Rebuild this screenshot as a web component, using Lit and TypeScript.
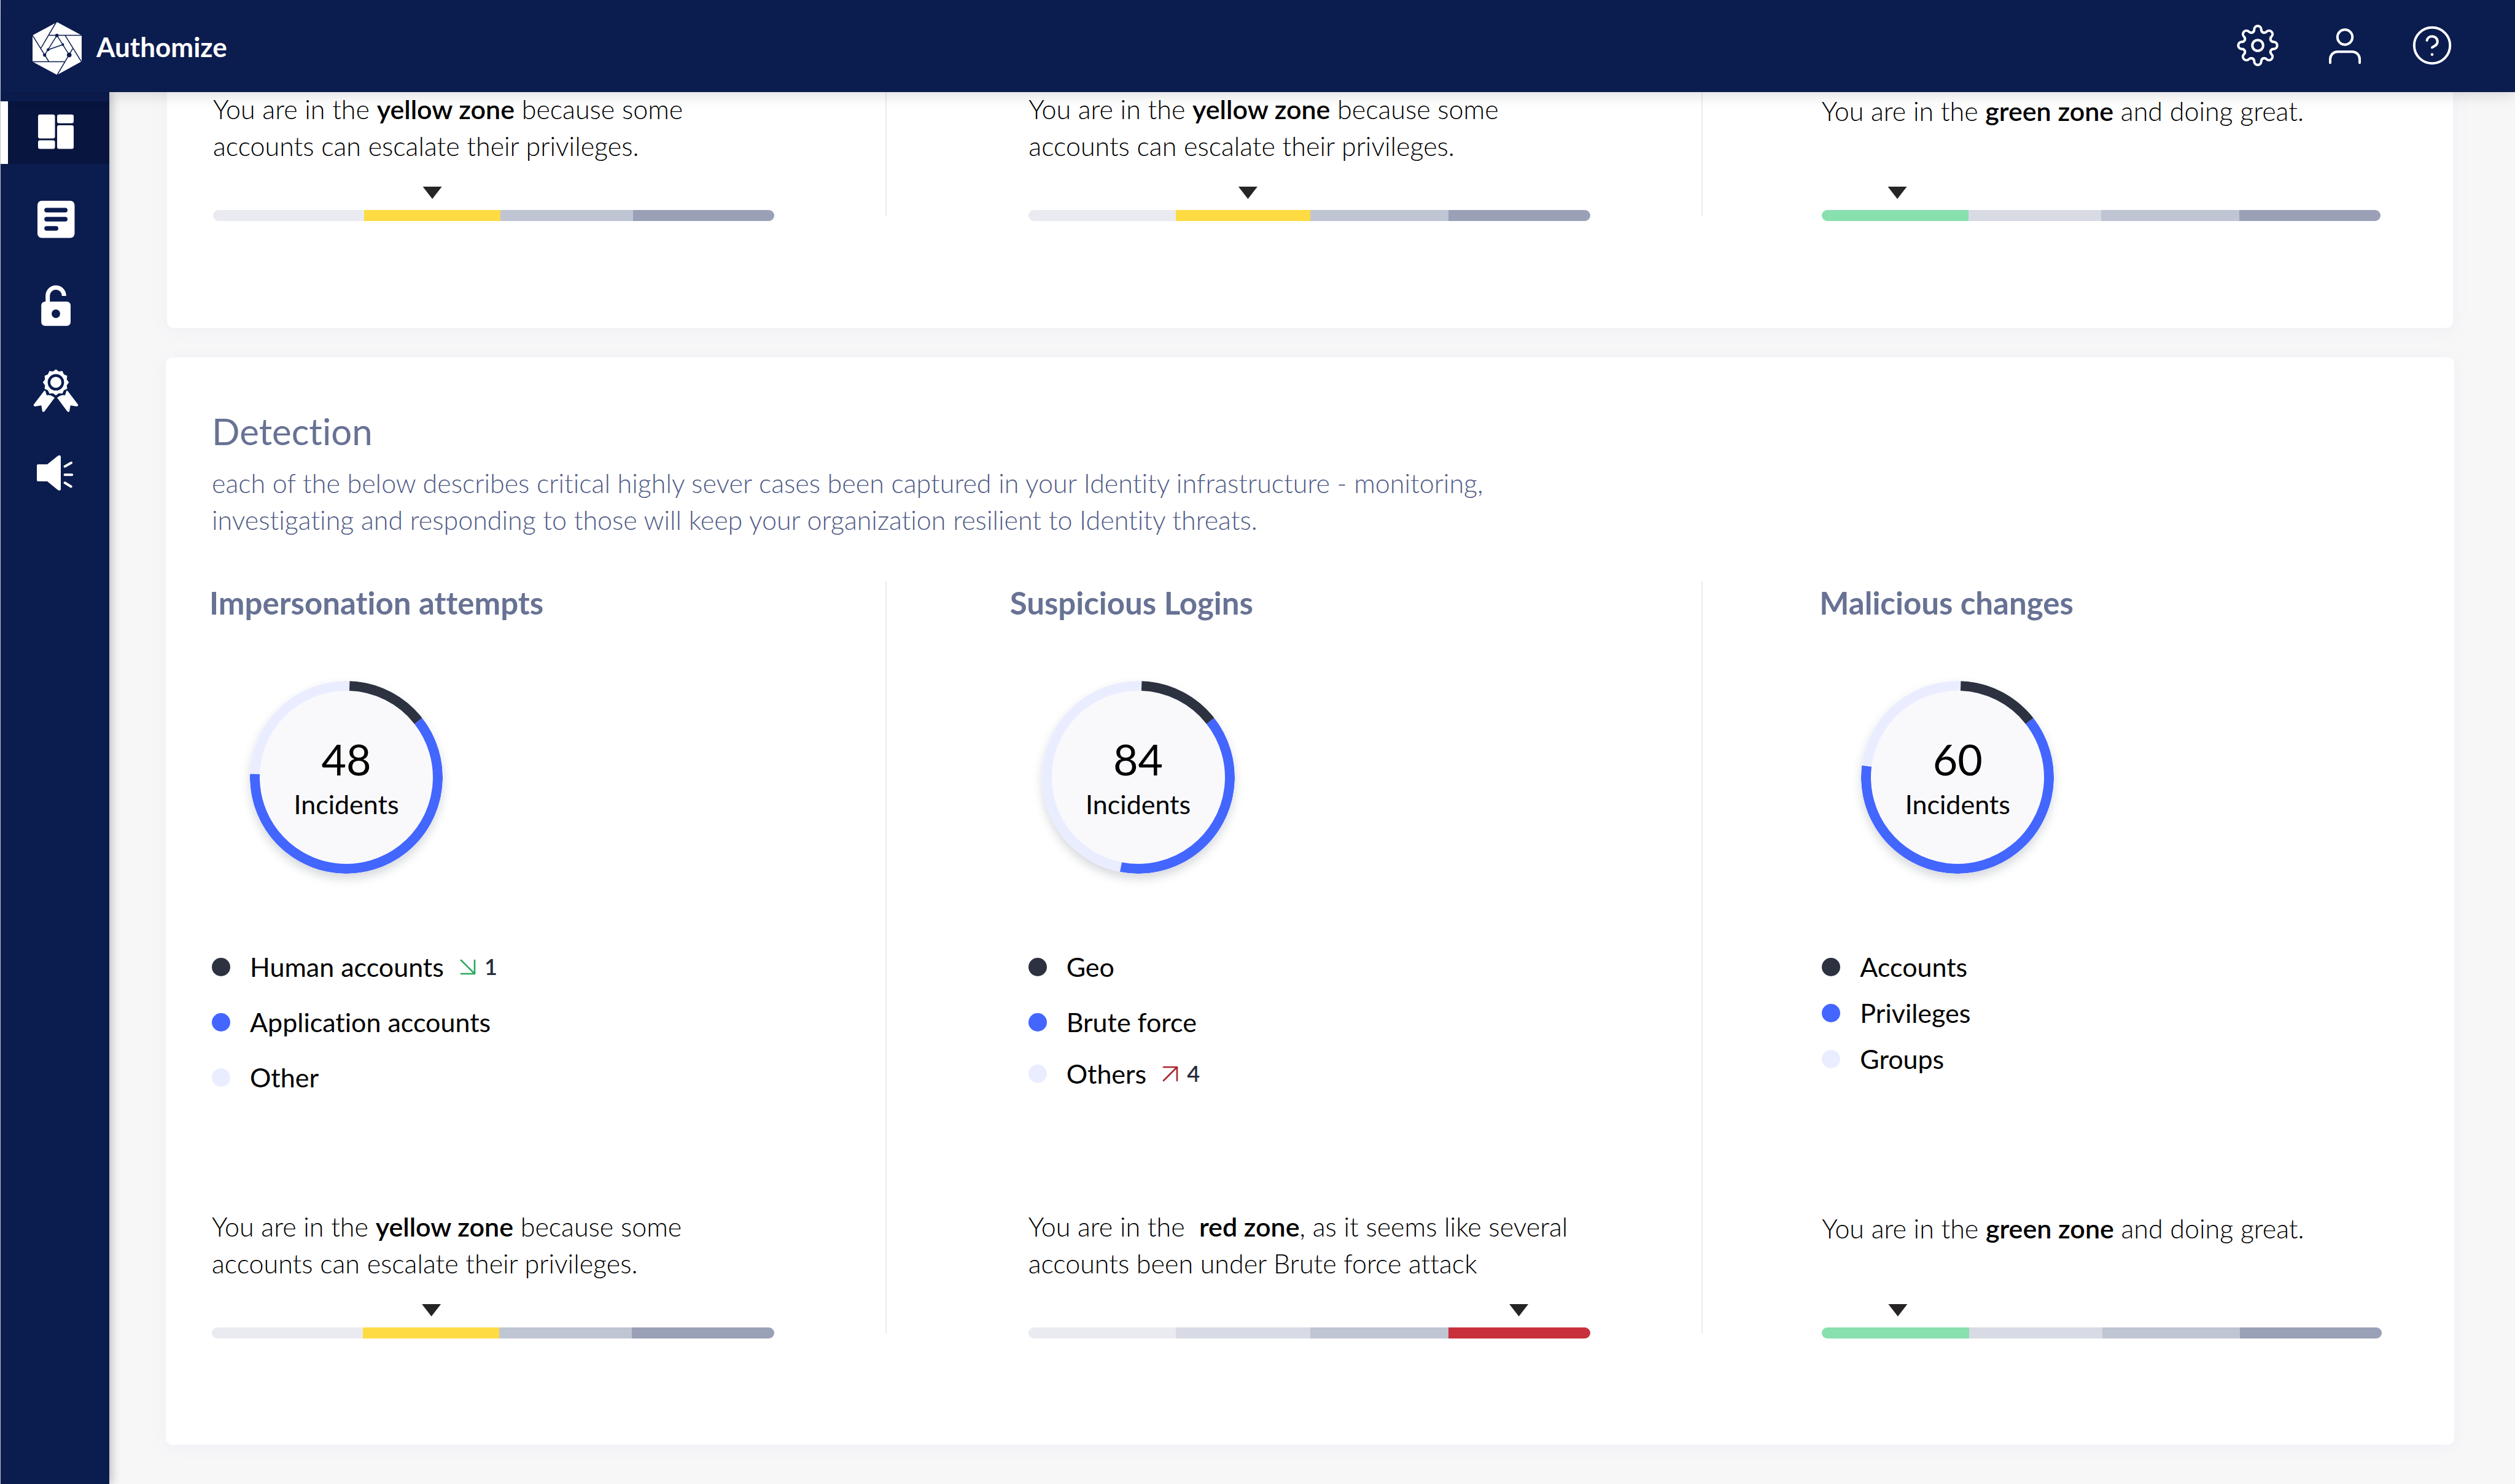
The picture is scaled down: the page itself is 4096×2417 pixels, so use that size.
import { LitElement, html, svg, css, nothing } from "lit";
import { customElement, property } from "lit/decorators.js";
import { classMap } from "lit/directives/class-map.js";
import { styleMap } from "lit/directives/style-map.js";

type Tone = "faint" | "pale" | "mid" | "deep" | "yellow" | "green" | "red";

interface Gauge {
  lead: string;
  zone: string;
  rest: string;
  short?: boolean;
  marker: number;
  segments: [number, Tone][];
}

interface LegendEntry {
  label: string;
  trend?: { dir: "down" | "up"; value: number };
}

interface Incident {
  name: string;
  count: number;
  darkEnd: number;
  blueEnd: number;
  spacing: "wide" | "mixed" | "tight";
  legend: LegendEntry[];
  gauge: Gauge;
}

const yellowFirst: Gauge = {
  lead: "You are in the ",
  zone: "yellow zone",
  rest: " because some accounts can escalate their privileges.",
  marker: 39,
  segments: [[246, "faint"], [222, "yellow"], [216, "mid"], [231, "deep"]],
};

const yellowSecond: Gauge = {
  ...yellowFirst,
  segments: [[240, "faint"], [219, "yellow"], [225, "mid"], [231, "deep"]],
};

const red: Gauge = {
  lead: "You are in the \u00a0",
  zone: "red zone",
  rest: ", as it seems like several accounts been under Brute force attack",
  marker: 87.2,
  segments: [[240, "faint"], [219, "pale"], [225, "mid"], [231, "red"]],
};

const green: Gauge = {
  lead: "You are in the ",
  zone: "green zone",
  rest: " and doing great.",
  short: true,
  marker: 13.5,
  segments: [[240, "green"], [217, "pale"], [225, "mid"], [231, "deep"]],
};

const incidents: Incident[] = [
  {
    name: "Impersonation attempts",
    count: 48,
    darkEnd: 52,
    blueEnd: 272,
    spacing: "wide",
    legend: [
      { label: "Human accounts", trend: { dir: "down", value: 1 } },
      { label: "Application accounts" },
      { label: "Other" },
    ],
    gauge: yellowFirst,
  },
  {
    name: "Suspicious Logins",
    count: 84,
    darkEnd: 52,
    blueEnd: 191,
    spacing: "mixed",
    legend: [
      { label: "Geo" },
      { label: "Brute force" },
      { label: "Others", trend: { dir: "up", value: 4 } },
    ],
    gauge: red,
  },
  {
    name: "Malicious changes",
    count: 60,
    darkEnd: 52,
    blueEnd: 277,
    spacing: "tight",
    legend: [{ label: "Accounts" }, { label: "Privileges" }, { label: "Groups" }],
    gauge: green,
  },
];

/* ---------- icons ---------- */

const logoMark = html`
  <svg class="mark" viewBox="0 -7 80 93" aria-hidden="true">
    <polygon fill="#fff" points="40,0 80,21.5 80,64 40,86 0,64.5 0,21.5" />
    <g stroke="#0b1c4f" stroke-width="1.5" fill="none">
      <path d="M38.9 -.5 13.7 42.3M27 21.4H80M53 21.7 79.6 64.6M65.3 43.3 40 86.2M52.7 64.4H0M26.3 64 0 21.6" />
      <path d="M39.7 21.7 19.7 53.7M25.3 45 49.3 36.7M39.7 21.7 59.7 53.3" />
    </g>
    <g fill="#0b1c4f">
      <circle cx="39.7" cy="21.7" r="2.8" />
      <circle cx="49.3" cy="36.7" r="2.1" />
      <circle cx="25.3" cy="45" r="2.3" />
      <circle cx="19.7" cy="53.7" r="2.6" />
      <circle cx="59.7" cy="53.5" r="3.8" />
    </g>
  </svg>
`;

const gearTooth =
  "M-8.7 -21.1C-6.3 -22.1 -5.7 -24 -5.7 -26C-5.7 -29.2 -3.2 -31.7 0 -31.7C3.2 -31.7 5.7 -29.2 5.7 -26C5.7 -24 6.3 -22.1 8.7 -21.1";

const gearIcon = svg`
  ${[0, 45, 90, 135, 180, 225, 270, 315].map(
    (a) => svg`<path d=${gearTooth} transform="rotate(${a})" />`,
  )}
  <circle r="8.8" />
`;

const userIcon = svg`
  <circle cy="-13.5" r="12.2" />
  <path d="M-24 28.2V22.2A12 12 0 0 1 -12 10.2H12A12 12 0 0 1 24 22.2V28.2" />
`;

const helpIcon = svg`
  <circle r="29.2" />
  <path d="M-8.5 -8.2C-7.8 -12.2 -4.4 -14.8 0 -14.8C5 -14.8 8.8 -11 8.8 -6.2C8.8 -.6 4.2 .6 0 3.4" />
  <circle cy="14.7" r="2.3" fill="#fff" stroke="none" />
`;

const dashboardIcon = svg`
  <rect x="-29" y="-29.5" width="27.5" height="39" rx="3" />
  <rect x="-29" y="12.5" width="27.5" height="14" rx="3" />
  <rect x="2" y="-29.5" width="27" height="14.3" rx="3" />
  <rect x="2" y="-12" width="27" height="38.6" rx="3" />
`;

const notesIcon = svg`
  <rect x="-30" y="-30" width="60.5" height="60.5" rx="7" />
  <path d="M-15 -14.8H15.2M-15 0H15.2M-15 15H.2" stroke="#0b1c4f" stroke-width="7.6" stroke-linecap="round" />
`;

const lockIcon = svg`
  <path d="M-13.3 -4V-16.4A13.3 13.3 0 0 1 13.3 -16.4V-16" fill="none" stroke="#fff" stroke-width="7" />
  <rect x="-23.8" y="-6.7" width="47.8" height="39.4" rx="6" />
  <circle cy="13" r="6.9" fill="#0b1c4f" />
`;

const rosette = Array.from({ length: 24 }, (_, i) => {
  const radius = i % 2 ? 18.4 : 21.2;
  const angle = (i * Math.PI) / 12;
  return `${(Math.sin(angle) * radius).toFixed(2)},${(-13.3 - Math.cos(angle) * radius).toFixed(2)}`;
}).join(" ");

const ribbon =
  "M-19.2 .8Q-17.6 -.4 -16.9 1.4L-15 7.7Q-9 6.6 -5.4 9.4L-2 11.7L-18.3 33.7Q-21.4 36.6 -22.2 33.2L-23.7 24.3L-34 25.9Q-37.2 25.4 -35.8 22.6Z";

const badgeIcon = svg`
  <polygon points=${rosette} />
  <circle cy="-13.3" r="11.2" fill="none" stroke="#0b1c4f" stroke-width="4.3" />
  <path d=${ribbon} />
  <path d=${ribbon} transform="scale(-1 1)" />
`;

const speakerIcon = svg`
  <path d="M-29 -13.7H-14L3.5 -27.8Q8 -30 8 -26V26.6Q8 30.2 3.5 28.3L-14 14H-29Q-31 14 -31 12V-11.7Q-31 -13.7 -29 -13.7Z" />
  <path d="M14.6 -10.3 25 -16.2M14.6 3.3H26.2M14.6 16.3 24.7 22.5" stroke="#fff" stroke-width="4" stroke-linecap="round" />
`;

/* ---------- zone message and gauge ---------- */

@customElement("zone-gauge")
export class ZoneGauge extends LitElement {
  @property({ attribute: false }) data!: Gauge;

  static styles = css`
    :host {
      display: block;
    }
    .message {
      margin: 0 0 36px;
      min-height: 120px;
      font-size: 43px;
      line-height: 60px;
      font-weight: 300;
      color: #000;
    }
    .message.short {
      line-height: 66px;
    }
    strong {
      font-weight: 600;
    }
    .marker {
      width: 31px;
      height: 20px;
      margin-bottom: 18px;
      background: #262425;
      clip-path: polygon(0 0, 100% 0, 50% 100%);
    }
    .bar {
      display: flex;
      height: 18px;
      border-radius: 9px;
      overflow: hidden;
    }
    .faint { background: #eaebf1; }
    .pale { background: #d8dbe4; }
    .mid { background: #c0c5d4; }
    .deep { background: #9aa1b7; }
    .yellow { background: #ffdb43; }
    .green { background: #88e0ae; }
    .red { background: #c8303b; }
  `;

  render() {
    const g = this.data;
    return html`
      <p class=${classMap({ message: true, short: !!g.short })}>${g.lead}<strong>${g.zone}</strong>${g.rest}</p>
      <div class="marker" style=${styleMap({ marginLeft: `calc(${g.marker}% - 15px)` })}></div>
      <div class="bar">
        ${g.segments.map(([share, tone]) => html`<span class=${tone} style=${styleMap({ flexGrow: String(share) })}></span>`)}
      </div>
    `;
  }
}

/* ---------- incident ring ---------- */

@customElement("incident-ring")
export class IncidentRing extends LitElement {
  @property({ type: Number }) count = 0;
  @property({ type: Number }) darkEnd = 0;
  @property({ type: Number }) blueEnd = 0;

  static styles = css`
    :host {
      display: grid;
      width: 314px;
      height: 314px;
      place-items: center;
    }
    svg,
    .text {
      grid-area: 1 / 1;
    }
    svg {
      width: 314px;
      height: 314px;
      border-radius: 50%;
      box-shadow: 0 8px 16px rgba(44, 62, 80, 0.2);
    }
    .text {
      text-align: center;
      color: #000;
    }
    .count {
      display: block;
      font-size: 70px;
      line-height: 88px;
    }
    .label {
      display: block;
      font-size: 43px;
      line-height: 60px;
    }
  `;

  render() {
    const arc = (from: number, to: number, color: string) => svg`
      <circle r="149" pathLength="360" stroke=${color} stroke-dasharray="${to - from} 360"
        transform="rotate(${from - 90})" />`;
    return html`
      <svg viewBox="-157 -157 314 314" fill="none" stroke-width="16" aria-hidden="true">
        <circle r="149" fill="#f9f9fc" stroke="#eaedff" />
        ${arc(2, this.darkEnd, "#2c3240")} ${arc(this.darkEnd, this.blueEnd, "#4366ff")}
      </svg>
      <div class="text">
        <span class="count">${this.count}</span>
        <span class="label">Incidents</span>
      </div>
    `;
  }
}

/* ---------- page ---------- */

@customElement("app-root")
export class AppRoot extends LitElement {
  static styles = css`
    :host {
      display: block;
      font-family: Lato, "Open Sans", sans-serif;
      font-variant-ligatures: none;
      background: #f7f7f8;
      color: #000;
    }
    .app {
      display: grid;
      grid-template: auto 1fr / 177px minmax(0, 1fr);
      min-height: 100vh;
      box-sizing: border-box;
      border-left: 1px solid #dcdde2;
    }

    .header {
      grid-column: 1 / -1;
      z-index: 2;
      display: flex;
      align-items: center;
      justify-content: space-between;
      height: 150px;
      box-sizing: border-box;
      padding: 0 99px 3px 52px;
      background: #0b1c4f;
      box-shadow: 0 4px 24px rgba(0, 0, 0, 0.14);
    }
    .brand {
      display: flex;
      align-items: center;
      gap: 24px;
      padding-top: 4px;
      color: #fff;
      text-decoration: none;
      font-size: 44px;
      line-height: 60px;
      font-weight: 700;
    }
    .mark {
      width: 80px;
      height: 93px;
    }
    .tools {
      display: flex;
      gap: 70px;
    }
    .tool {
      display: block;
      width: 72px;
      height: 72px;
      padding: 0;
      border: 0;
      background: none;
      cursor: pointer;
    }
    .tool svg {
      display: block;
      width: 72px;
      height: 72px;
    }

    .sidebar {
      z-index: 1;
      display: flex;
      flex-direction: column;
      gap: 39px;
      padding-top: 15px;
      background: #0b1c4f;
      box-shadow: 2px 0 16px rgba(0, 0, 0, 0.3);
    }
    .nav-item {
      display: flex;
      align-items: center;
      justify-content: center;
      height: 102px;
      padding-left: 3px;
    }
    .nav-item.compact {
      height: 95px;
    }
    .nav-item.active {
      background: #08163f;
      box-shadow: inset 12px 0 #fff;
    }
    .nav-item svg {
      width: 76px;
      height: 76px;
    }

    .main {
      margin-top: -24px;
      padding: 0 99px 62px 92px;
    }
    .card {
      background: #fff;
      border-radius: 11px;
      box-shadow: 0 4px 24px rgba(222, 226, 240, 0.3);
    }
    .summary {
      margin: 0 2px 48px;
      padding: 22px 0 182px;
    }
    .detection {
      padding: 84px 0 181px;
    }
    .intro {
      padding: 0 75px;
      margin-bottom: 70px;
      color: #677294;
    }
    h2 {
      margin: 0 0 19px;
      font-size: 60px;
      line-height: 72px;
      font-weight: 400;
    }
    .description {
      margin: 0;
      max-width: 2200px;
      font-size: 43px;
      line-height: 60px;
      font-weight: 300;
      color: #4f5b86;
    }

    .columns {
      display: grid;
      grid-template-columns: 1173fr 1329fr 1223fr;
    }
    .column {
      display: flex;
      flex-direction: column;
      min-width: 0;
      padding: 0 181px 0 75px;
      border-right: 2px solid #ebebf2;
      --title-shift: -4px;
      --ring-indent: 62px;
    }
    .column:nth-child(2) {
      padding-left: 231px;
      --title-shift: -30px;
      --ring-indent: 22px;
    }
    .column:nth-child(3) {
      padding: 0 118px 0 194px;
      border-right: 0;
      --ring-indent: 64px;
    }
    .column zone-gauge {
      margin-bottom: -8px;
    }
    h3 {
      margin: 0 0 92px var(--title-shift);
      font-size: 51px;
      line-height: 70px;
      font-weight: 700;
      color: #677294;
    }
    incident-ring {
      margin: 0 0 122px var(--ring-indent);
    }
    .legend {
      display: grid;
      align-content: start;
      flex: 1;
      grid-template-rows: 60px 60px 60px;
      row-gap: 30px;
      margin: 0 0 183px;
      padding: 0;
      list-style: none;
    }
    .legend.mixed {
      grid-template-rows: 60px 60px 48px;
    }
    .legend.tight {
      row-gap: 15px;
    }
    .entry {
      display: flex;
      align-items: center;
      font-size: 43px;
      line-height: 48px;
    }
    .dot {
      width: 30px;
      height: 30px;
      margin-right: 32px;
      border-radius: 50%;
      background: #2c3240;
    }
    .entry:nth-child(2) .dot {
      background: #4366ff;
    }
    .entry:nth-child(3) .dot {
      background: #eaedff;
    }
    .arrow {
      width: 26px;
      height: 26px;
      margin: 0 14px 0 26px;
      fill: none;
      stroke-width: 2.6;
      stroke-linecap: round;
      stroke-linejoin: round;
    }
    .arrow.down {
      stroke: #2aa860;
    }
    .arrow.up {
      stroke: #a8262c;
    }
    .value {
      padding-bottom: 2px;
      font-size: 36px;
      font-weight: 600;
      color: #262c3c;
    }
  `;

  private tool(label: string, icon: unknown) {
    return html`
      <button class="tool" type="button" aria-label=${label}>
        <svg viewBox="-36 -36 72 72" fill="none" stroke="#fff" stroke-width="4" stroke-linecap="round">${icon}</svg>
      </button>
    `;
  }

  private navItem(label: string, icon: unknown, extra = "") {
    return html`
      <a class="nav-item ${extra}" href="#" aria-label=${label}>
        <svg viewBox="-38 -38 76 76" fill="#fff">${icon}</svg>
      </a>
    `;
  }

  private entry(e: LegendEntry) {
    return html`
      <li class="entry">
        <span class="dot"></span><span>${e.label}</span>
        ${e.trend
          ? html`<svg class="arrow ${e.trend.dir}" viewBox="0 0 26 26" aria-hidden="true">
                <path d=${e.trend.dir === "down" ? "M2 2 24 24M24 2V24H2" : "M2 24 24 2M2 2H24V24"} /></svg
              ><span class="value">${e.trend.value}</span>`
          : nothing}
      </li>
    `;
  }

  render() {
    return html`
      <div class="app">
        <header class="header">
          <a class="brand" href="#">${logoMark}<span>Authomize</span></a>
          <div class="tools">
            ${this.tool("Settings", gearIcon)} ${this.tool("Account", userIcon)} ${this.tool("Help", helpIcon)}
          </div>
        </header>
        <nav class="sidebar">
          ${this.navItem("Dashboard", dashboardIcon, "active")} ${this.navItem("Reports", notesIcon)}
          ${this.navItem("Access", lockIcon)} ${this.navItem("Certifications", badgeIcon, "compact")}
          ${this.navItem("Announcements", speakerIcon, "compact")}
        </nav>
        <main class="main">
          <section class="card summary">
            <div class="columns">
              ${[yellowFirst, yellowSecond, green].map(
                (g) => html`<div class="column"><zone-gauge .data=${g}></zone-gauge></div>`,
              )}
            </div>
          </section>
          <section class="card detection">
            <div class="intro">
              <h2>Detection</h2>
              <p class="description">
                each of the below describes critical highly sever cases been captured in your Identity infrastructure -
                monitoring, investigating and responding to those will keep your organization resilient to Identity
                threats.
              </p>
            </div>
            <div class="columns">
              ${incidents.map(
                (i) => html`
                  <article class="column">
                    <h3>${i.name}</h3>
                    <incident-ring .count=${i.count} .darkEnd=${i.darkEnd} .blueEnd=${i.blueEnd}></incident-ring>
                    <ul class="legend ${i.spacing}">
                      ${i.legend.map((e) => this.entry(e))}
                    </ul>
                    <zone-gauge .data=${i.gauge}></zone-gauge>
                  </article>
                `,
              )}
            </div>
          </section>
        </main>
      </div>
    `;
  }
}
